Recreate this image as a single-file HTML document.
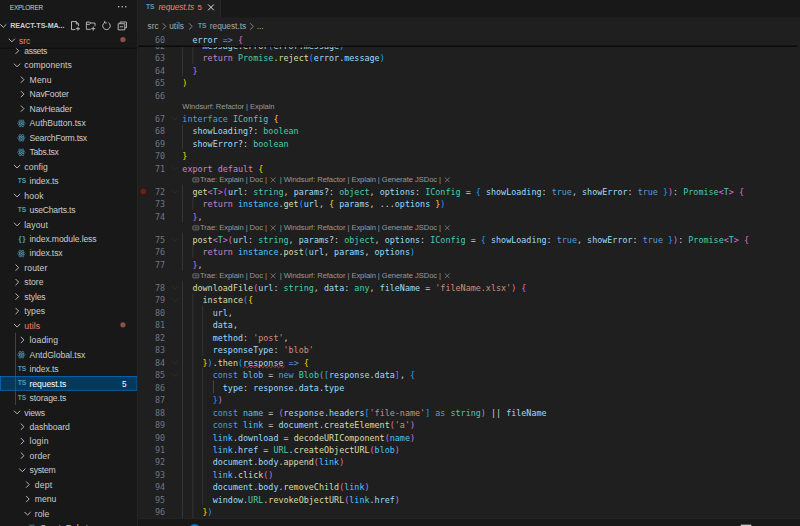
<!DOCTYPE html>
<html lang="en"><head><meta charset="utf-8"><title>request.ts - react-ts-manager</title>
<style>
html,body{margin:0;padding:0;background:#1f1f1f;width:800px;height:526px;overflow:hidden}
#wrap{position:absolute;left:0;top:0;width:1218px;height:812px;transform-origin:0 0;transform:translateY(-4.470px) scale(0.6573);font-family:"Liberation Sans", sans-serif;color:#cccccc;-webkit-font-smoothing:antialiased}
#side{position:absolute;left:0;top:0;width:209px;height:812px;background:#181818;border-right:1px solid #2b2b2b;overflow:hidden}
#title{position:absolute;left:15px;top:.8px;height:35px;line-height:35px;font-size:9.8px;color:#cccccc;letter-spacing:-.4px}
#dots{position:absolute;left:177.6px;top:9.4px;width:16px;height:16px;fill:#cccccc}
#hdr{position:absolute;left:0;top:35px;width:209px;height:22px;}
#hdr .name{position:absolute;left:15.5px;top:.4px;line-height:22px;font-size:10.95px;font-weight:bold;color:#cccccc;letter-spacing:-.15px}
#hdr svg{position:absolute;top:3px;width:16px;height:16px;color:#cccccc}
#rows{position:absolute;left:0;top:57px;width:209px;height:760px;overflow:hidden}
#rowsin{position:absolute;left:0;top:-57px;width:209px}
.row{position:absolute;left:0;width:209px;height:22px;line-height:22px;font-size:13.1px;color:#cccccc;white-space:nowrap;box-sizing:border-box}
.row.sel{background:#04395e;outline:1px solid #0078d4;outline-offset:-1px;color:#ffffff}
.row.err .lbl{color:#f88070}
.lbl{position:absolute;top:1px;letter-spacing:-.05px}
.twb{position:absolute;top:3px;width:16px;height:16px;color:#cccccc}
.tw{width:16px;height:16px;display:block}
.fib{position:absolute;top:3.5px;width:15px;height:15px}
.fi{width:15px;height:15px;display:block}
.tsi{position:absolute;top:0;font-size:10.3px;font-weight:bold;color:#519aba;letter-spacing:-.2px;line-height:22px;width:15px;text-align:center}
.lessi{position:absolute;top:-.5px;font-size:12px;font-weight:bold;color:#519aba;letter-spacing:1.2px;margin-left:.6px;line-height:22px;width:15px;text-align:center}
.badge{position:absolute;right:16.5px;top:1px;font-size:12.4px;color:#ffffff}
.dot{position:absolute;left:182.6px;top:6.3px;width:8px;height:8px;border-radius:50%;background:#8c5048}
.tg{position:absolute;width:1px;background:#585858}
#sticky{position:absolute;left:0;top:57px;width:209px;height:22px;background:#181818}
#sticky .row{top:0}
#sticky .lbl{color:#f88070}
#ed{position:absolute;left:210px;top:0;width:1010px;height:812px;background:#1f1f1f;overflow:hidden}
#tabs{position:absolute;left:0;top:0;width:1010px;height:35px;background:#181818;border-bottom:1px solid #2b2b2b;box-sizing:border-box}
#tab{position:absolute;left:0;top:0;width:125px;height:35px;background:#1f1f1f;border-right:1px solid #2b2b2b;border-top:1px solid #0078d4;box-sizing:content-box;margin-top:0}
#tab .tsi{left:11px;top:5.5px;line-height:22px;font-size:10.3px}
#tab .nm{position:absolute;left:31px;top:1px;line-height:33px;font-size:12.6px;font-style:italic;color:#f88070;letter-spacing:-.1px}
#tab .cnt{position:absolute;left:90.5px;top:1px;line-height:33px;font-size:12px;color:#f88070}
#tab svg{position:absolute;left:102.5px;top:8.5px;width:16px;height:16px;color:#ffffff}
#bc{position:absolute;left:0;top:35px;width:1010px;height:22px;background:#1f1f1f;line-height:24px;font-size:12.6px;color:#a9a9a9;white-space:nowrap}
#bc span{position:absolute;top:0}
#bc svg{position:absolute;top:4px;width:16px;height:16px;color:#a9a9a9}
#bc .tsi{line-height:24px}
#code{position:absolute;left:-210px;top:0;width:1220px;height:795px;overflow:hidden}
.ln{position:absolute;left:228px;width:23.2px;height:19px;line-height:19px;text-align:right;font-family:"DejaVu Sans Mono", "Liberation Mono", monospace;font-size:12.795px;color:#6e7681;white-space:pre}
.cl{position:absolute;left:277.4px;height:19px;line-height:19px;font-family:"DejaVu Sans Mono", "Liberation Mono", monospace;font-size:12.795px;color:#cccccc;white-space:pre}
.ig{position:absolute;width:1px;height:19px;background:#404040}
.lens{position:absolute;height:16px;line-height:15px;font-size:11.6px;color:#999999;white-space:pre;letter-spacing:-.12px}
.lens .x{display:inline-block;width:9px;height:9px;vertical-align:-1px;margin:0 2.5px 0 2px}
.cli{display:inline-block;width:10.5px;height:7.5px;border:1.2px solid #999;border-radius:1.5px;margin-right:1px;vertical-align:-.3px;box-sizing:border-box;background:linear-gradient(#999,#999) 1.8px 2px/4.5px 1.1px no-repeat}
.fold{position:absolute;left:258px;width:16px;height:16px;color:#2f2f2f}
.bp{position:absolute;left:214.3px;width:8px;height:8px;border-radius:50%;background:#7f1a12}
#stk{position:absolute;left:210px;top:57px;width:1004px;height:19px;background:#1f1f1f;overflow:visible}
#stksh{position:absolute;left:211px;top:75.6px;width:1002px;height:3.2px;background:linear-gradient(#090909 0%,#0b0b0b 65%,rgba(11,11,11,0))}
#ssh{position:absolute;left:0;top:78.6px;width:209px;height:3.2px;background:linear-gradient(rgba(0,0,0,.42) 0%,rgba(0,0,0,.36) 65%,rgba(0,0,0,0))}
#stk .ln{left:18px;top:1px}
#stk .cl{left:67.39999999999998px;top:1px}
#panel{position:absolute;left:210px;top:795px;width:1010px;height:30px;background:#181818;border-top:1px solid #2b2b2b}
#pbadge{position:absolute;left:76.5px;top:8px;width:18px;height:18px;border-radius:9px;background:#0078d4}
#picon{position:absolute;left:917px;top:9.3px;width:16px;height:10px;background:#cccccc}
.v{color:#9cdcfe}.k{color:#569cd6}.c{color:#c586c0}.f{color:#dcdcaa}.t{color:#4ec9b0}.s{color:#ce9178}.n{color:#4fc1ff}.p{color:#cccccc}.o{color:#d4d4d4}.b1{color:#ffd700}.b2{color:#da70d6}.b3{color:#179fff}
.sq{position:relative}
.sqw{position:absolute;left:0;bottom:-1.5px;width:61.6px;height:4px;overflow:visible}
</style></head><body>
<div id="wrap">
<div id="ed">
 <div id="code">
<div class="ln" style="top:66.6px">62</div>
<div class="cl" style="top:66.6px"><span class="p">    </span><span class="v">message</span><span class="p">.</span><span class="f">error</span><span class="b3">(</span><span class="v">error</span><span class="p">.</span><span class="v">message</span><span class="b3">)</span></div>
<div class="ig" style="top:66px;left:277.40px"></div>
<div class="ig" style="top:66px;left:292.79px"></div>
<div class="ln" style="top:85.6px">63</div>
<div class="cl" style="top:85.6px"><span class="p">    </span><span class="c">return</span><span class="p"> </span><span class="t">Promise</span><span class="p">.</span><span class="f">reject</span><span class="b3">(</span><span class="v">error</span><span class="p">.</span><span class="v">message</span><span class="b3">)</span></div>
<div class="ig" style="top:85px;left:277.40px"></div>
<div class="ig" style="top:85px;left:292.79px"></div>
<div class="ln" style="top:104.6px">64</div>
<div class="cl" style="top:104.6px"><span class="p">  </span><span class="b2">}</span></div>
<div class="ig" style="top:104px;left:277.40px"></div>
<div class="ln" style="top:123.6px">65</div>
<div class="cl" style="top:123.6px"><span class="b1">)</span></div>
<div class="ln" style="top:142.6px">66</div>
<div class="cl" style="top:142.6px"></div>
<div class="lens" style="top:161px;left:277.40px">Windsurf: Refactor | Explain</div>
<div class="ln" style="top:177.6px">67</div>
<div class="cl" style="top:177.6px"><span class="k">interface</span><span class="p"> </span><span class="t">IConfig</span><span class="p"> </span><span class="b1">{</span></div>
<div class="ln" style="top:196.6px">68</div>
<div class="cl" style="top:196.6px"><span class="p">  </span><span class="v">showLoading</span><span class="o">?:</span><span class="p"> </span><span class="t">boolean</span></div>
<div class="ig" style="top:196px;left:277.40px"></div>
<div class="ln" style="top:215.6px">69</div>
<div class="cl" style="top:215.6px"><span class="p">  </span><span class="v">showError</span><span class="o">?:</span><span class="p"> </span><span class="t">boolean</span></div>
<div class="ig" style="top:215px;left:277.40px"></div>
<div class="ln" style="top:234.6px">70</div>
<div class="cl" style="top:234.6px"><span class="b1">}</span></div>
<div class="ln" style="top:253.6px">71</div>
<div class="cl" style="top:253.6px"><span class="c">export</span><span class="p"> </span><span class="c">default</span><span class="p"> </span><span class="b1">{</span></div>
<div class="lens" style="top:272px;left:292.79px"><span class="cli"></span>Trae: Explain | Doc | <svg class="x" viewBox="0 0 9 9"><path d="M.6.6l7.8 7.8M8.4.6.6 8.4" fill="none" stroke="currentColor" stroke-width="1"/></svg> | Windsurf: Refactor | Explain | Generate JSDoc | <svg class="x" viewBox="0 0 9 9"><path d="M.6.6l7.8 7.8M8.4.6.6 8.4" fill="none" stroke="currentColor" stroke-width="1"/></svg></div>
<div class="ln" style="top:288.6px">72</div>
<div class="cl" style="top:288.6px"><span class="p">  </span><span class="f">get</span><span class="b2">&lt;</span><span class="t">T</span><span class="b2">&gt;</span><span class="b2">(</span><span class="v">url</span><span class="o">:</span><span class="p"> </span><span class="t">string</span><span class="p">, </span><span class="v">params</span><span class="o">?:</span><span class="p"> </span><span class="t">object</span><span class="p">, </span><span class="v">options</span><span class="o">:</span><span class="p"> </span><span class="t">IConfig</span><span class="p"> </span><span class="o">=</span><span class="p"> </span><span class="b3">{</span><span class="p"> </span><span class="v">showLoading</span><span class="o">:</span><span class="p"> </span><span class="k">true</span><span class="p">, </span><span class="v">showError</span><span class="o">:</span><span class="p"> </span><span class="k">true</span><span class="p"> </span><span class="b3">}</span><span class="b2">)</span><span class="o">:</span><span class="p"> </span><span class="t">Promise</span><span class="b2">&lt;</span><span class="t">T</span><span class="b2">&gt;</span><span class="p"> </span><span class="b2">{</span></div>
<div class="ig" style="top:288px;left:277.40px"></div>
<div class="ln" style="top:307.6px">73</div>
<div class="cl" style="top:307.6px"><span class="p">    </span><span class="c">return</span><span class="p"> </span><span class="n">instance</span><span class="p">.</span><span class="f">get</span><span class="b3">(</span><span class="v">url</span><span class="p">, </span><span class="b1">{</span><span class="p"> </span><span class="v">params</span><span class="p">, </span><span class="o">...</span><span class="v">options</span><span class="p"> </span><span class="b1">}</span><span class="b3">)</span></div>
<div class="ig" style="top:307px;left:277.40px"></div>
<div class="ig" style="top:307px;left:292.79px"></div>
<div class="ln" style="top:326.6px">74</div>
<div class="cl" style="top:326.6px"><span class="p">  </span><span class="b2">}</span><span class="p">,</span></div>
<div class="ig" style="top:326px;left:277.40px"></div>
<div class="lens" style="top:345px;left:292.79px"><span class="cli"></span>Trae: Explain | Doc | <svg class="x" viewBox="0 0 9 9"><path d="M.6.6l7.8 7.8M8.4.6.6 8.4" fill="none" stroke="currentColor" stroke-width="1"/></svg> | Windsurf: Refactor | Explain | Generate JSDoc | <svg class="x" viewBox="0 0 9 9"><path d="M.6.6l7.8 7.8M8.4.6.6 8.4" fill="none" stroke="currentColor" stroke-width="1"/></svg></div>
<div class="ln" style="top:361.6px">75</div>
<div class="cl" style="top:361.6px"><span class="p">  </span><span class="f">post</span><span class="b2">&lt;</span><span class="t">T</span><span class="b2">&gt;</span><span class="b2">(</span><span class="v">url</span><span class="o">:</span><span class="p"> </span><span class="t">string</span><span class="p">, </span><span class="v">params</span><span class="o">?:</span><span class="p"> </span><span class="t">object</span><span class="p">, </span><span class="v">options</span><span class="o">:</span><span class="p"> </span><span class="t">IConfig</span><span class="p"> </span><span class="o">=</span><span class="p"> </span><span class="b3">{</span><span class="p"> </span><span class="v">showLoading</span><span class="o">:</span><span class="p"> </span><span class="k">true</span><span class="p">, </span><span class="v">showError</span><span class="o">:</span><span class="p"> </span><span class="k">true</span><span class="p"> </span><span class="b3">}</span><span class="b2">)</span><span class="o">:</span><span class="p"> </span><span class="t">Promise</span><span class="b2">&lt;</span><span class="t">T</span><span class="b2">&gt;</span><span class="p"> </span><span class="b2">{</span></div>
<div class="ig" style="top:361px;left:277.40px"></div>
<div class="ln" style="top:380.6px">76</div>
<div class="cl" style="top:380.6px"><span class="p">    </span><span class="c">return</span><span class="p"> </span><span class="n">instance</span><span class="p">.</span><span class="f">post</span><span class="b3">(</span><span class="v">url</span><span class="p">, </span><span class="v">params</span><span class="p">, </span><span class="v">options</span><span class="b3">)</span></div>
<div class="ig" style="top:380px;left:277.40px"></div>
<div class="ig" style="top:380px;left:292.79px"></div>
<div class="ln" style="top:399.6px">77</div>
<div class="cl" style="top:399.6px"><span class="p">  </span><span class="b2">}</span><span class="p">,</span></div>
<div class="ig" style="top:399px;left:277.40px"></div>
<div class="lens" style="top:418px;left:292.79px"><span class="cli"></span>Trae: Explain | Doc | <svg class="x" viewBox="0 0 9 9"><path d="M.6.6l7.8 7.8M8.4.6.6 8.4" fill="none" stroke="currentColor" stroke-width="1"/></svg> | Windsurf: Refactor | Explain | Generate JSDoc | <svg class="x" viewBox="0 0 9 9"><path d="M.6.6l7.8 7.8M8.4.6.6 8.4" fill="none" stroke="currentColor" stroke-width="1"/></svg></div>
<div class="ln" style="top:434.6px">78</div>
<div class="cl" style="top:434.6px"><span class="p">  </span><span class="f">downloadFile</span><span class="b2">(</span><span class="v">url</span><span class="o">:</span><span class="p"> </span><span class="t">string</span><span class="p">, </span><span class="v">data</span><span class="o">:</span><span class="p"> </span><span class="t">any</span><span class="p">, </span><span class="v">fileName</span><span class="p"> </span><span class="o">=</span><span class="p"> </span><span class="s">&#x27;fileName.xlsx&#x27;</span><span class="b2">)</span><span class="p"> </span><span class="b2">{</span></div>
<div class="ig" style="top:434px;left:277.40px"></div>
<div class="ln" style="top:453.6px">79</div>
<div class="cl" style="top:453.6px"><span class="p">    </span><span class="f">instance</span><span class="b3">(</span><span class="b1">{</span></div>
<div class="ig" style="top:453px;left:277.40px"></div>
<div class="ig" style="top:453px;left:292.79px"></div>
<div class="ln" style="top:472.6px">80</div>
<div class="cl" style="top:472.6px"><span class="p">      </span><span class="v">url</span><span class="p">,</span></div>
<div class="ig" style="top:472px;left:277.40px"></div>
<div class="ig" style="top:472px;left:292.79px"></div>
<div class="ig" style="top:472px;left:308.19px"></div>
<div class="ln" style="top:491.6px">81</div>
<div class="cl" style="top:491.6px"><span class="p">      </span><span class="v">data</span><span class="p">,</span></div>
<div class="ig" style="top:491px;left:277.40px"></div>
<div class="ig" style="top:491px;left:292.79px"></div>
<div class="ig" style="top:491px;left:308.19px"></div>
<div class="ln" style="top:510.6px">82</div>
<div class="cl" style="top:510.6px"><span class="p">      </span><span class="v">method</span><span class="o">:</span><span class="p"> </span><span class="s">&#x27;post&#x27;</span><span class="p">,</span></div>
<div class="ig" style="top:510px;left:277.40px"></div>
<div class="ig" style="top:510px;left:292.79px"></div>
<div class="ig" style="top:510px;left:308.19px"></div>
<div class="ln" style="top:529.6px">83</div>
<div class="cl" style="top:529.6px"><span class="p">      </span><span class="v">responseType</span><span class="o">:</span><span class="p"> </span><span class="s">&#x27;blob&#x27;</span></div>
<div class="ig" style="top:529px;left:277.40px"></div>
<div class="ig" style="top:529px;left:292.79px"></div>
<div class="ig" style="top:529px;left:308.19px"></div>
<div class="ln" style="top:548.6px">84</div>
<div class="cl" style="top:548.6px"><span class="p">    </span><span class="b1">}</span><span class="b3">)</span><span class="p">.</span><span class="f">then</span><span class="b3">(</span><span class="v sq">response<svg class="sqw" viewBox="0 0 61.6 4"><polyline points="0.0,3.4 3.0,0.6 6.0,3.4 9.0,0.6 12.0,3.4 15.0,0.6 18.0,3.4 21.0,0.6 24.0,3.4 27.0,0.6 30.0,3.4 33.0,0.6 36.0,3.4 39.0,0.6 42.0,3.4 45.0,0.6 48.0,3.4 51.0,0.6 54.0,3.4 57.0,0.6 60.0,3.4 63.0,0.6" fill="none" stroke="#f14c4c" stroke-width="1"/></svg></span><span class="p"> </span><span class="k">=&gt;</span><span class="p"> </span><span class="b1">{</span></div>
<div class="ig" style="top:548px;left:277.40px"></div>
<div class="ig" style="top:548px;left:292.79px"></div>
<div class="ln" style="top:567.6px">85</div>
<div class="cl" style="top:567.6px"><span class="p">      </span><span class="k">const</span><span class="p"> </span><span class="n">blob</span><span class="p"> </span><span class="o">=</span><span class="p"> </span><span class="k">new</span><span class="p"> </span><span class="t">Blob</span><span class="b2">(</span><span class="b3">[</span><span class="v">response</span><span class="p">.</span><span class="v">data</span><span class="b3">]</span><span class="p">, </span><span class="b3">{</span></div>
<div class="ig" style="top:567px;left:277.40px"></div>
<div class="ig" style="top:567px;left:292.79px"></div>
<div class="ig" style="top:567px;left:308.19px"></div>
<div class="ln" style="top:586.6px">86</div>
<div class="cl" style="top:586.6px"><span class="p">        </span><span class="v">type</span><span class="o">:</span><span class="p"> </span><span class="v">response</span><span class="p">.</span><span class="v">data</span><span class="p">.</span><span class="v">type</span></div>
<div class="ig" style="top:586px;left:277.40px"></div>
<div class="ig" style="top:586px;left:292.79px"></div>
<div class="ig" style="top:586px;left:308.19px"></div>
<div class="ig" style="top:586px;left:323.58px;background:#5c5c5c"></div>
<div class="ln" style="top:605.6px">87</div>
<div class="cl" style="top:605.6px"><span class="p">      </span><span class="b3">}</span><span class="b2">)</span></div>
<div class="ig" style="top:605px;left:277.40px"></div>
<div class="ig" style="top:605px;left:292.79px"></div>
<div class="ig" style="top:605px;left:308.19px"></div>
<div class="ln" style="top:624.6px">88</div>
<div class="cl" style="top:624.6px"><span class="p">      </span><span class="k">const</span><span class="p"> </span><span class="n">name</span><span class="p"> </span><span class="o">=</span><span class="p"> </span><span class="b2">(</span><span class="v">response</span><span class="p">.</span><span class="v">headers</span><span class="b3">[</span><span class="s">&#x27;file-name&#x27;</span><span class="b3">]</span><span class="p"> </span><span class="k">as</span><span class="p"> </span><span class="t">string</span><span class="b2">)</span><span class="p"> </span><span class="o">||</span><span class="p"> </span><span class="v">fileName</span></div>
<div class="ig" style="top:624px;left:277.40px"></div>
<div class="ig" style="top:624px;left:292.79px"></div>
<div class="ig" style="top:624px;left:308.19px"></div>
<div class="ln" style="top:643.6px">89</div>
<div class="cl" style="top:643.6px"><span class="p">      </span><span class="k">const</span><span class="p"> </span><span class="n">link</span><span class="p"> </span><span class="o">=</span><span class="p"> </span><span class="v">document</span><span class="p">.</span><span class="f">createElement</span><span class="b2">(</span><span class="s">&#x27;a&#x27;</span><span class="b2">)</span></div>
<div class="ig" style="top:643px;left:277.40px"></div>
<div class="ig" style="top:643px;left:292.79px"></div>
<div class="ig" style="top:643px;left:308.19px"></div>
<div class="ln" style="top:662.6px">90</div>
<div class="cl" style="top:662.6px"><span class="p">      </span><span class="n">link</span><span class="p">.</span><span class="v">download</span><span class="p"> </span><span class="o">=</span><span class="p"> </span><span class="f">decodeURIComponent</span><span class="b2">(</span><span class="n">name</span><span class="b2">)</span></div>
<div class="ig" style="top:662px;left:277.40px"></div>
<div class="ig" style="top:662px;left:292.79px"></div>
<div class="ig" style="top:662px;left:308.19px"></div>
<div class="ln" style="top:681.6px">91</div>
<div class="cl" style="top:681.6px"><span class="p">      </span><span class="n">link</span><span class="p">.</span><span class="v">href</span><span class="p"> </span><span class="o">=</span><span class="p"> </span><span class="t">URL</span><span class="p">.</span><span class="f">createObjectURL</span><span class="b2">(</span><span class="n">blob</span><span class="b2">)</span></div>
<div class="ig" style="top:681px;left:277.40px"></div>
<div class="ig" style="top:681px;left:292.79px"></div>
<div class="ig" style="top:681px;left:308.19px"></div>
<div class="ln" style="top:700.6px">92</div>
<div class="cl" style="top:700.6px"><span class="p">      </span><span class="v">document</span><span class="p">.</span><span class="v">body</span><span class="p">.</span><span class="f">append</span><span class="b2">(</span><span class="n">link</span><span class="b2">)</span></div>
<div class="ig" style="top:700px;left:277.40px"></div>
<div class="ig" style="top:700px;left:292.79px"></div>
<div class="ig" style="top:700px;left:308.19px"></div>
<div class="ln" style="top:719.6px">93</div>
<div class="cl" style="top:719.6px"><span class="p">      </span><span class="n">link</span><span class="p">.</span><span class="f">click</span><span class="b2">(</span><span class="b2">)</span></div>
<div class="ig" style="top:719px;left:277.40px"></div>
<div class="ig" style="top:719px;left:292.79px"></div>
<div class="ig" style="top:719px;left:308.19px"></div>
<div class="ln" style="top:738.6px">94</div>
<div class="cl" style="top:738.6px"><span class="p">      </span><span class="v">document</span><span class="p">.</span><span class="v">body</span><span class="p">.</span><span class="f">removeChild</span><span class="b2">(</span><span class="n">link</span><span class="b2">)</span></div>
<div class="ig" style="top:738px;left:277.40px"></div>
<div class="ig" style="top:738px;left:292.79px"></div>
<div class="ig" style="top:738px;left:308.19px"></div>
<div class="ln" style="top:757.6px">95</div>
<div class="cl" style="top:757.6px"><span class="p">      </span><span class="v">window</span><span class="p">.</span><span class="t">URL</span><span class="p">.</span><span class="f">revokeObjectURL</span><span class="b2">(</span><span class="n">link</span><span class="p">.</span><span class="v">href</span><span class="b2">)</span></div>
<div class="ig" style="top:757px;left:277.40px"></div>
<div class="ig" style="top:757px;left:292.79px"></div>
<div class="ig" style="top:757px;left:308.19px"></div>
<div class="ln" style="top:776.6px">96</div>
<div class="cl" style="top:776.6px"><span class="p">    </span><span class="b1">}</span><span class="b3">)</span></div>
<div class="ig" style="top:776px;left:277.40px"></div>
<div class="ig" style="top:776px;left:292.79px"></div>
<svg class="fold" style="top:178.5px" viewBox="0 0 16 16"><path d="M3.2 5.7 8 10.5l4.8-4.8" fill="none" stroke="currentColor" stroke-width="1.3"/></svg>
<svg class="fold" style="top:254.5px" viewBox="0 0 16 16"><path d="M3.2 5.7 8 10.5l4.8-4.8" fill="none" stroke="currentColor" stroke-width="1.3"/></svg>
<svg class="fold" style="top:289.5px" viewBox="0 0 16 16"><path d="M3.2 5.7 8 10.5l4.8-4.8" fill="none" stroke="currentColor" stroke-width="1.3"/></svg>
<svg class="fold" style="top:362.5px" viewBox="0 0 16 16"><path d="M3.2 5.7 8 10.5l4.8-4.8" fill="none" stroke="currentColor" stroke-width="1.3"/></svg>
<svg class="fold" style="top:435.5px" viewBox="0 0 16 16"><path d="M3.2 5.7 8 10.5l4.8-4.8" fill="none" stroke="currentColor" stroke-width="1.3"/></svg>
<svg class="fold" style="top:454.5px" viewBox="0 0 16 16"><path d="M3.2 5.7 8 10.5l4.8-4.8" fill="none" stroke="currentColor" stroke-width="1.3"/></svg>
<svg class="fold" style="top:549.5px" viewBox="0 0 16 16"><path d="M3.2 5.7 8 10.5l4.8-4.8" fill="none" stroke="currentColor" stroke-width="1.3"/></svg>
<svg class="fold" style="top:568.5px" viewBox="0 0 16 16"><path d="M3.2 5.7 8 10.5l4.8-4.8" fill="none" stroke="currentColor" stroke-width="1.3"/></svg>
<div class="bp" style="top:293.5px"></div>
 </div>
 <div id="tabs"><div id="tab"><span class="tsi">TS</span><span class="nm">request.ts</span><span class="cnt">5</span><svg viewBox="0 0 16 16"><path d="M3.6 3.6l8.8 8.8M12.4 3.6l-8.8 8.8" fill="none" stroke="currentColor" stroke-width="1.3"/></svg></div></div>
 <div id="bc"><span style="left:14.5px">src</span><svg style="left:31.5px" viewBox="0 0 16 16"><path d="M5.7 3.3 10.4 8l-4.7 4.7" fill="none" stroke="currentColor" stroke-width="1.15"/></svg><span style="left:47.5px">utils</span><svg style="left:71.5px" viewBox="0 0 16 16"><path d="M5.7 3.3 10.4 8l-4.7 4.7" fill="none" stroke="currentColor" stroke-width="1.15"/></svg><span class="tsi" style="left:90.2px">TS</span><span style="left:109.2px">request.ts</span><svg style="left:165.2px" viewBox="0 0 16 16"><path d="M5.7 3.3 10.4 8l-4.7 4.7" fill="none" stroke="currentColor" stroke-width="1.15"/></svg><span style="left:180.6px">...</span></div>
</div>
<div id="stk"><div class="ln">60</div><div class="cl"><span class="p">  </span><span class="v">error</span><span class="p"> </span><span class="k">=&gt;</span><span class="p"> </span><span class="b2">{</span></div></div>
<div id="stksh"></div>
<div id="panel"><div id="pbadge"></div><div id="picon"></div></div>
<div id="side">
 <div id="title">EXPLORER</div><svg id="dots" viewBox="0 0 16 16"><circle cx="2.6" cy="8" r="1.15"/><circle cx="8" cy="8" r="1.15"/><circle cx="13.4" cy="8" r="1.15"/></svg>
 <div id="rows"><div id="rowsin">
<div class="row" style="top:73.2px"><span class="twb" style="left:18.4px"><svg class="tw" viewBox="0 0 16 16"><path d="M5.7 3.3 10.4 8l-4.7 4.7" fill="none" stroke="currentColor" stroke-width="1.35"/></svg></span><span class="lbl" style="left:37px;letter-spacing:-0.56px">assets</span></div>
<div class="row" style="top:95.2px"><span class="twb" style="left:18.4px"><svg class="tw" viewBox="0 0 16 16"><path d="M3.3 5.7 8 10.4l4.7-4.7" fill="none" stroke="currentColor" stroke-width="1.35"/></svg></span><span class="lbl" style="left:37px;letter-spacing:0.09px">components</span></div>
<div class="row" style="top:117.2px"><span class="twb" style="left:26.4px"><svg class="tw" viewBox="0 0 16 16"><path d="M5.7 3.3 10.4 8l-4.7 4.7" fill="none" stroke="currentColor" stroke-width="1.35"/></svg></span><span class="lbl" style="left:45px;letter-spacing:0.25px">Menu</span></div>
<div class="row" style="top:139.2px"><span class="twb" style="left:26.4px"><svg class="tw" viewBox="0 0 16 16"><path d="M5.7 3.3 10.4 8l-4.7 4.7" fill="none" stroke="currentColor" stroke-width="1.35"/></svg></span><span class="lbl" style="left:45px;letter-spacing:-0.15px">NavFooter</span></div>
<div class="row" style="top:161.2px"><span class="twb" style="left:26.4px"><svg class="tw" viewBox="0 0 16 16"><path d="M5.7 3.3 10.4 8l-4.7 4.7" fill="none" stroke="currentColor" stroke-width="1.35"/></svg></span><span class="lbl" style="left:45px;letter-spacing:-0.20px">NavHeader</span></div>
<div class="row" style="top:183.2px"><span class="fib" style="left:25px"><svg class="fi" viewBox="0 0 16 16"><g fill="none" stroke="#519aba" stroke-width="0.95"><ellipse cx="8" cy="8" rx="6.3" ry="2.5"/><ellipse cx="8" cy="8" rx="6.3" ry="2.5" transform="rotate(60 8 8)"/><ellipse cx="8" cy="8" rx="6.3" ry="2.5" transform="rotate(120 8 8)"/></g><circle cx="8" cy="8" r="1.25" fill="#519aba"/></svg></span><span class="lbl" style="left:45px;letter-spacing:0.02px">AuthButton.tsx</span></div>
<div class="row" style="top:205.2px"><span class="fib" style="left:25px"><svg class="fi" viewBox="0 0 16 16"><g fill="none" stroke="#519aba" stroke-width="0.95"><ellipse cx="8" cy="8" rx="6.3" ry="2.5"/><ellipse cx="8" cy="8" rx="6.3" ry="2.5" transform="rotate(60 8 8)"/><ellipse cx="8" cy="8" rx="6.3" ry="2.5" transform="rotate(120 8 8)"/></g><circle cx="8" cy="8" r="1.25" fill="#519aba"/></svg></span><span class="lbl" style="left:45px;letter-spacing:-0.37px">SearchForm.tsx</span></div>
<div class="row" style="top:227.2px"><span class="fib" style="left:25px"><svg class="fi" viewBox="0 0 16 16"><g fill="none" stroke="#519aba" stroke-width="0.95"><ellipse cx="8" cy="8" rx="6.3" ry="2.5"/><ellipse cx="8" cy="8" rx="6.3" ry="2.5" transform="rotate(60 8 8)"/><ellipse cx="8" cy="8" rx="6.3" ry="2.5" transform="rotate(120 8 8)"/></g><circle cx="8" cy="8" r="1.25" fill="#519aba"/></svg></span><span class="lbl" style="left:45px;letter-spacing:-0.49px">Tabs.tsx</span></div>
<div class="row" style="top:249.2px"><span class="twb" style="left:18.4px"><svg class="tw" viewBox="0 0 16 16"><path d="M3.3 5.7 8 10.4l4.7-4.7" fill="none" stroke="currentColor" stroke-width="1.35"/></svg></span><span class="lbl" style="left:37px;letter-spacing:0.18px">config</span></div>
<div class="row" style="top:271.2px"><span class="tsi" style="left:26px">TS</span><span class="lbl" style="left:45px;letter-spacing:-0.13px">index.ts</span></div>
<div class="row" style="top:293.2px"><span class="twb" style="left:18.4px"><svg class="tw" viewBox="0 0 16 16"><path d="M3.3 5.7 8 10.4l4.7-4.7" fill="none" stroke="currentColor" stroke-width="1.35"/></svg></span><span class="lbl" style="left:37px;letter-spacing:0.33px">hook</span></div>
<div class="row" style="top:315.2px"><span class="tsi" style="left:26px">TS</span><span class="lbl" style="left:45px;letter-spacing:-0.34px">useCharts.ts</span></div>
<div class="row" style="top:337.2px"><span class="twb" style="left:18.4px"><svg class="tw" viewBox="0 0 16 16"><path d="M3.3 5.7 8 10.4l4.7-4.7" fill="none" stroke="currentColor" stroke-width="1.35"/></svg></span><span class="lbl" style="left:37px;letter-spacing:0.18px">layout</span></div>
<div class="row" style="top:359.2px"><span class="lessi" style="left:26px">{}</span><span class="lbl" style="left:45px;letter-spacing:-0.18px">index.module.less</span></div>
<div class="row" style="top:381.2px"><span class="fib" style="left:25px"><svg class="fi" viewBox="0 0 16 16"><g fill="none" stroke="#519aba" stroke-width="0.95"><ellipse cx="8" cy="8" rx="6.3" ry="2.5"/><ellipse cx="8" cy="8" rx="6.3" ry="2.5" transform="rotate(60 8 8)"/><ellipse cx="8" cy="8" rx="6.3" ry="2.5" transform="rotate(120 8 8)"/></g><circle cx="8" cy="8" r="1.25" fill="#519aba"/></svg></span><span class="lbl" style="left:45px;letter-spacing:-0.17px">index.tsx</span></div>
<div class="row" style="top:403.2px"><span class="twb" style="left:18.4px"><svg class="tw" viewBox="0 0 16 16"><path d="M5.7 3.3 10.4 8l-4.7 4.7" fill="none" stroke="currentColor" stroke-width="1.35"/></svg></span><span class="lbl" style="left:37px;letter-spacing:0.18px">router</span></div>
<div class="row" style="top:425.2px"><span class="twb" style="left:18.4px"><svg class="tw" viewBox="0 0 16 16"><path d="M5.7 3.3 10.4 8l-4.7 4.7" fill="none" stroke="currentColor" stroke-width="1.35"/></svg></span><span class="lbl" style="left:37px;letter-spacing:0.01px">store</span></div>
<div class="row" style="top:447.2px"><span class="twb" style="left:18.4px"><svg class="tw" viewBox="0 0 16 16"><path d="M5.7 3.3 10.4 8l-4.7 4.7" fill="none" stroke="currentColor" stroke-width="1.35"/></svg></span><span class="lbl" style="left:37px;letter-spacing:-0.20px">styles</span></div>
<div class="row" style="top:469.2px"><span class="twb" style="left:18.4px"><svg class="tw" viewBox="0 0 16 16"><path d="M5.7 3.3 10.4 8l-4.7 4.7" fill="none" stroke="currentColor" stroke-width="1.35"/></svg></span><span class="lbl" style="left:37px;letter-spacing:0.04px">types</span></div>
<div class="row err" style="top:491.2px"><span class="twb" style="left:18.4px"><svg class="tw" viewBox="0 0 16 16"><path d="M3.3 5.7 8 10.4l4.7-4.7" fill="none" stroke="currentColor" stroke-width="1.35"/></svg></span><span class="lbl" style="left:37px;letter-spacing:0.13px">utils</span><span class="dot"></span></div>
<div class="row" style="top:513.2px"><span class="twb" style="left:26.4px"><svg class="tw" viewBox="0 0 16 16"><path d="M5.7 3.3 10.4 8l-4.7 4.7" fill="none" stroke="currentColor" stroke-width="1.35"/></svg></span><span class="lbl" style="left:45px;letter-spacing:0.17px">loading</span></div>
<div class="row" style="top:535.2px"><span class="fib" style="left:25px"><svg class="fi" viewBox="0 0 16 16"><g fill="none" stroke="#519aba" stroke-width="0.95"><ellipse cx="8" cy="8" rx="6.3" ry="2.5"/><ellipse cx="8" cy="8" rx="6.3" ry="2.5" transform="rotate(60 8 8)"/><ellipse cx="8" cy="8" rx="6.3" ry="2.5" transform="rotate(120 8 8)"/></g><circle cx="8" cy="8" r="1.25" fill="#519aba"/></svg></span><span class="lbl" style="left:45px;letter-spacing:-0.04px">AntdGlobal.tsx</span></div>
<div class="row" style="top:557.2px"><span class="tsi" style="left:26px">TS</span><span class="lbl" style="left:45px;letter-spacing:-0.13px">index.ts</span></div>
<div class="row sel" style="top:579.2px"><span class="tsi" style="left:26px">TS</span><span class="lbl" style="left:45px;letter-spacing:-0.16px">request.ts</span><span class="badge">5</span></div>
<div class="row" style="top:601.2px"><span class="tsi" style="left:26px">TS</span><span class="lbl" style="left:45px;letter-spacing:-0.16px">storage.ts</span></div>
<div class="row" style="top:623.2px"><span class="twb" style="left:18.4px"><svg class="tw" viewBox="0 0 16 16"><path d="M3.3 5.7 8 10.4l4.7-4.7" fill="none" stroke="currentColor" stroke-width="1.35"/></svg></span><span class="lbl" style="left:37px;letter-spacing:-0.26px">views</span></div>
<div class="row" style="top:645.2px"><span class="twb" style="left:26.4px"><svg class="tw" viewBox="0 0 16 16"><path d="M5.7 3.3 10.4 8l-4.7 4.7" fill="none" stroke="currentColor" stroke-width="1.35"/></svg></span><span class="lbl" style="left:45px;letter-spacing:-0.07px">dashboard</span></div>
<div class="row" style="top:667.2px"><span class="twb" style="left:26.4px"><svg class="tw" viewBox="0 0 16 16"><path d="M5.7 3.3 10.4 8l-4.7 4.7" fill="none" stroke="currentColor" stroke-width="1.35"/></svg></span><span class="lbl" style="left:45px;letter-spacing:0.25px">login</span></div>
<div class="row" style="top:689.2px"><span class="twb" style="left:26.4px"><svg class="tw" viewBox="0 0 16 16"><path d="M5.7 3.3 10.4 8l-4.7 4.7" fill="none" stroke="currentColor" stroke-width="1.35"/></svg></span><span class="lbl" style="left:45px;letter-spacing:0.13px">order</span></div>
<div class="row" style="top:711.2px"><span class="twb" style="left:26.4px"><svg class="tw" viewBox="0 0 16 16"><path d="M3.3 5.7 8 10.4l4.7-4.7" fill="none" stroke="currentColor" stroke-width="1.35"/></svg></span><span class="lbl" style="left:45px;letter-spacing:-0.33px">system</span></div>
<div class="row" style="top:733.2px"><span class="twb" style="left:34.4px"><svg class="tw" viewBox="0 0 16 16"><path d="M5.7 3.3 10.4 8l-4.7 4.7" fill="none" stroke="currentColor" stroke-width="1.35"/></svg></span><span class="lbl" style="left:53px;letter-spacing:0.29px">dept</span></div>
<div class="row" style="top:755.2px"><span class="twb" style="left:34.4px"><svg class="tw" viewBox="0 0 16 16"><path d="M5.7 3.3 10.4 8l-4.7 4.7" fill="none" stroke="currentColor" stroke-width="1.35"/></svg></span><span class="lbl" style="left:53px;letter-spacing:-0.01px">menu</span></div>
<div class="row" style="top:777.2px"><span class="twb" style="left:34.4px"><svg class="tw" viewBox="0 0 16 16"><path d="M3.3 5.7 8 10.4l4.7-4.7" fill="none" stroke="currentColor" stroke-width="1.35"/></svg></span><span class="lbl" style="left:53px;letter-spacing:0.06px">role</span></div>
<div class="row" style="top:799.2px"><span class="fib" style="left:41px"><svg class="fi" viewBox="0 0 16 16"><g fill="none" stroke="#519aba" stroke-width="0.95"><ellipse cx="8" cy="8" rx="6.3" ry="2.5"/><ellipse cx="8" cy="8" rx="6.3" ry="2.5" transform="rotate(60 8 8)"/><ellipse cx="8" cy="8" rx="6.3" ry="2.5" transform="rotate(120 8 8)"/></g><circle cx="8" cy="8" r="1.25" fill="#519aba"/></svg></span><span class="lbl" style="left:61px;letter-spacing:-0.05px">CreateRole.tsx</span></div>
<div class="row" style="top:821.2px"><span class="fib" style="left:41px"><svg class="fi" viewBox="0 0 16 16"><g fill="none" stroke="#519aba" stroke-width="0.95"><ellipse cx="8" cy="8" rx="6.3" ry="2.5"/><ellipse cx="8" cy="8" rx="6.3" ry="2.5" transform="rotate(60 8 8)"/><ellipse cx="8" cy="8" rx="6.3" ry="2.5" transform="rotate(120 8 8)"/></g><circle cx="8" cy="8" r="1.25" fill="#519aba"/></svg></span><span class="lbl" style="left:61px;letter-spacing:-0.05px">SetPermission.tsx</span></div>
<div class="tg" style="left:23px;top:513.2px;height:110px"></div>
 </div></div>
 <div id="ssh"></div>
 <div id="sticky"><div class="row err" style="top:0.0px"><span class="twb" style="left:10.399999999999999px"><svg class="tw" viewBox="0 0 16 16"><path d="M3.3 5.7 8 10.4l4.7-4.7" fill="none" stroke="currentColor" stroke-width="1.35"/></svg></span><span class="lbl" style="left:29px;letter-spacing:-0.10px">src</span><span class="dot"></span></div></div>
 <div id="hdr"><svg style="left:-2.6px" viewBox="0 0 16 16"><path d="M3.3 5.7 8 10.4l4.7-4.7" fill="none" stroke="currentColor" stroke-width="1.35"/></svg><span class="name">REACT-TS-MA...</span>
  <svg style="left:107px" viewBox="0 0 16 16"><path d="M9 1.6H1.8v12.2h6M9 1.6 12.6 5.2v3M9 1.6V5.2h3.6M11.6 9.4v6M8.6 12.4h6" fill="none" stroke="currentColor" stroke-width="1.3"/></svg><svg style="left:130px" viewBox="0 0 16 16"><path d="M8 13.4H1.3V2.4h5.4l1.3 1.4h6.6V8.6M1.3 5.8h5.2L8 3.8M11.8 9.4v6M8.8 12.4h6" fill="none" stroke="currentColor" stroke-width="1.3"/></svg><svg style="left:154px" viewBox="0 0 16 16"><path d="M10.9 3.2A5.7 5.7 0 1 1 5.1 3.2M5.3 0.6v3.1h3.1" fill="none" stroke="currentColor" stroke-width="1.35"/></svg><svg style="left:178px" viewBox="0 0 16 16"><path d="M4.6 4.6V2.3h9.8v8.8h-2.4M1.8 4.9h10v9.3h-10zM4.2 9.5h5.2" fill="none" stroke="currentColor" stroke-width="1.3" stroke-linejoin="round"/></svg>
 </div>
</div>
</div>
</body></html>
